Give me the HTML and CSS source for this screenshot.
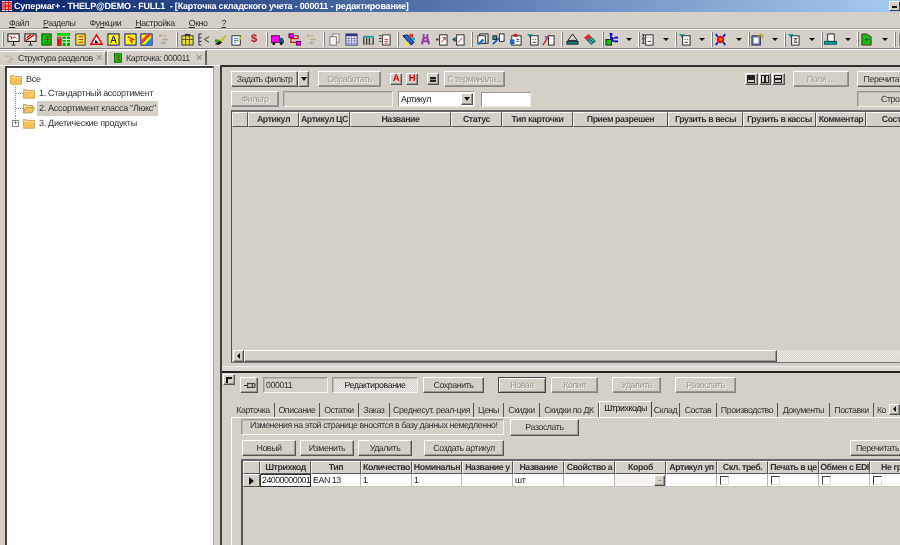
FILE: index.html
```html
<!DOCTYPE html>
<html lang="ru">
<head>
    <meta charset="UTF-8">
    <title>Супермаг+</title>
    <link rel="stylesheet" href="styles.css">
</head>
<body>

<!-- Icon set -->
<svg class="icon-defs" width="0" height="0">
    <symbol id="i-board" viewBox="0 0 14 14"><rect x="1" y="1" width="12" height="8" fill="#fff" stroke="#000"/><path d="M3 4h2v3M6 6l2-2 2 2" stroke="#d00" fill="none"/><path d="M7 9v3M5 13h4" stroke="#000"/></symbol>
    <symbol id="i-board2" viewBox="0 0 14 14"><rect x="1" y="1" width="12" height="8" fill="#e8e8e8" stroke="#000"/><path d="M2 8l9-6M3 5l4-3" stroke="#e00" stroke-width="1.4"/><path d="M7 9v3M5 13h4" stroke="#000"/></symbol>
    <symbol id="i-greendoc" viewBox="0 0 14 14"><rect x="2" y="1" width="10" height="12" fill="#0c0" stroke="#040"/><path d="M8 3v8M5 4h5M5 7h5M5 10h5" stroke="#b02020"/></symbol>
    <symbol id="i-greentable" viewBox="0 0 14 14"><rect width="14" height="3" fill="#0c0"/><rect y="4" width="5" height="10" fill="#d02020"/><rect x="1" y="5" width="3" height="1" fill="#6c6"/><rect x="6" y="4" width="8" height="10" fill="#0a0"/><path d="M6 7h8M6 10h8M10 4v10" stroke="#dfd"/></symbol>
    <symbol id="i-yellowdoc" viewBox="0 0 14 14"><rect x="2" y="1" width="10" height="12" fill="#f0e040" stroke="#333"/><path d="M5 4h5M5 7h5M5 10h5" stroke="#d02020"/></symbol>
    <symbol id="i-warn" viewBox="0 0 14 14"><path d="M7 2L13 12H1Z" fill="#fff" stroke="#e00" stroke-width="1.6"/><path d="M6 7l3 4H5Z" fill="#000"/></symbol>
    <symbol id="i-yellow-a" viewBox="0 0 14 14"><rect x="1" y="1" width="12" height="12" fill="#ff0" stroke="#008"/><path d="M4 11L7 3l3 8M5 8h4" stroke="#008" fill="none"/></symbol>
    <symbol id="i-yellow-r" viewBox="0 0 14 14"><rect x="1" y="1" width="12" height="12" fill="#ff0" stroke="#008"/><path d="M4 4l6 3-3 1 2 3" stroke="#e02020" stroke-width="1.5" fill="none"/></symbol>
    <symbol id="i-multi" viewBox="0 0 14 14"><rect x="1" y="1" width="12" height="12" fill="#ff0" stroke="#008"/><path d="M13 1L1 13V8l7-7Z" fill="#e04040"/><path d="M13 4v9H5Z" fill="#28c"/></symbol>
    <symbol id="i-faint" viewBox="0 0 14 14"><path d="M3 3h7M5 7h7M3 11h7" stroke="#b8b860"/><path d="M2 2h2v2H2ZM6 9h2v3H6Z" fill="#a0a0c8"/><rect x="8" y="6" width="3" height="2" fill="#c8a0a0"/></symbol>
    <symbol id="i-olive" viewBox="0 0 14 14"><rect x="1" y="3" width="12" height="10" fill="#e8e040" stroke="#333"/><path d="M1 7h12M5 3v10M9 3v10" stroke="#605010"/><rect x="4" y="1" width="6" height="2" fill="#333"/></symbol>
    <symbol id="i-bracket" viewBox="0 0 14 14"><path d="M5 1H2v12h3M2 5h3M2 9h3" stroke="#224" fill="none"/><path d="M13 4L8 7l5 3" stroke="#333" fill="none"/></symbol>
    <symbol id="i-pen" viewBox="0 0 14 14"><path d="M1 12l5-4 3 2-4 3Z" fill="#111"/><path d="M6 8l6-6 1 2-5 6Z" fill="#c8c020"/><rect x="1" y="7" width="4" height="3" fill="#20a020"/></symbol>
    <symbol id="i-docpen" viewBox="0 0 14 14"><rect x="1" y="3" width="9" height="10" fill="#fff" stroke="#224"/><path d="M3 6h5M3 8h5M3 10h3" stroke="#28c"/><path d="M7 9l5-7 1 1-5 7Z" fill="#e8d020"/></symbol>
    <symbol id="i-truck" viewBox="0 0 14 14"><rect x="0" y="3" width="9" height="7" fill="#f0f" stroke="#404"/><path d="M9 5h3l2 3v3H9Z" fill="#086070"/><circle cx="3" cy="11.5" r="1.5" fill="#111"/><circle cx="11" cy="11.5" r="1.5" fill="#111"/></symbol>
    <symbol id="i-route" viewBox="0 0 14 14"><rect x="1" y="1" width="5" height="4" fill="#f0f" stroke="#404"/><rect x="9" y="9" width="5" height="4" fill="#f0f" stroke="#404"/><path d="M6 3h5v3H3v4h6" stroke="#c02020" fill="none" stroke-width="1.3"/></symbol>
    <symbol id="i-copies" viewBox="0 0 14 14"><rect x="5" y="1" width="7" height="9" fill="#eee" stroke="#888"/><rect x="2" y="4" width="7" height="9" fill="#f4f4f4" stroke="#777"/></symbol>
    <symbol id="i-bluegrid" viewBox="0 0 14 14"><rect x="1" y="1" width="12" height="12" fill="#fff" stroke="#33337a"/><rect x="1" y="1" width="12" height="2.5" fill="#33337a"/><path d="M1 6h12M1 8.5h12M1 11h12M4 3v10M7 3v10M10 3v10" stroke="#8080c0"/></symbol>
    <symbol id="i-cols" viewBox="0 0 14 14"><rect x="1" y="3" width="12" height="2" fill="#20a0a0"/><path d="M2 5v7M5 5v7M8 5v7M12 5v7" stroke="#333" stroke-width="1.4"/><path d="M1 12h12" stroke="#777"/></symbol>
    <symbol id="i-listdoc" viewBox="0 0 14 14"><rect x="5" y="2" width="8" height="11" fill="#fff" stroke="#333"/><path d="M7 7h4M7 9h4M7 11h4" stroke="#e04040"/><path d="M1 3h3M1 6h3" stroke="#222"/><path d="M1 9h3" stroke="#080"/></symbol>
    <symbol id="i-tool" viewBox="0 0 14 14"><path d="M1 3l5-1 7 8-3 3Z" fill="#2060d0" stroke="#113"/><rect x="8" y="1" width="4" height="4" fill="#e03030"/><rect x="4" y="10" width="3" height="3" fill="#f0e020"/><rect x="11" y="5" width="3" height="3" fill="#10b0b0"/></symbol>
    <symbol id="i-figure" viewBox="0 0 14 14"><path d="M4 1h2v3h2V1h2v4l2 6-2 2-1-3H5l-1 3-2-2 2-6Z" fill="#9040a0"/><rect x="6" y="6" width="2" height="2" fill="#e0c0f0"/></symbol>
    <symbol id="i-docr" viewBox="0 0 14 14"><rect x="5" y="2" width="8" height="11" fill="#fff" stroke="#222"/><path d="M7 10l4-5M8 5h3v3" stroke="#d02020" fill="none"/><path d="M1 7h3" stroke="#444" stroke-width="2"/></symbol>
    <symbol id="i-docl" viewBox="0 0 14 14"><rect x="5" y="2" width="8" height="11" fill="#fff" stroke="#222"/><path d="M7 10l4-5" stroke="#d02020"/><path d="M0 7l4-3v6Z" fill="#106060"/></symbol>
    <symbol id="i-stack" viewBox="0 0 14 14"><rect x="4" y="1" width="9" height="10" fill="#ddd" stroke="#222"/><rect x="2" y="3" width="8" height="8" fill="#fff" stroke="#222"/><path d="M1 12l6-6 2 2-5 5Z" fill="#2878c0"/></symbol>
    <symbol id="i-link" viewBox="0 0 14 14"><rect x="8" y="1" width="5" height="8" fill="#fff" stroke="#222"/><path d="M1 12l7-7" stroke="#2060c0" stroke-width="2"/><rect x="1" y="3" width="4" height="4" fill="#20a0a0" stroke="#222"/></symbol>
    <symbol id="i-docpin" viewBox="0 0 14 14"><rect x="3" y="3" width="10" height="10" fill="#fff" stroke="#222"/><path d="M5 1h4v3H5Z" fill="#c02020"/><rect x="1" y="7" width="5" height="5" fill="#2868c0"/><path d="M8 7h3M8 9h3" stroke="#444"/></symbol>
    <symbol id="i-doctri" viewBox="0 0 14 14"><path d="M1 1h6L4 5Z" fill="#10a0a0"/><rect x="5" y="3" width="8" height="10" fill="#fff" stroke="#222"/><path d="M7 7h1M10 7h1M7 10h4" stroke="#333"/></symbol>
    <symbol id="i-arrowdoc" viewBox="0 0 14 14"><rect x="7" y="3" width="6" height="10" fill="#fff" stroke="#222"/><path d="M1 13L8 2" stroke="#c02020" stroke-width="1.4"/><path d="M3 3l3 3M6 3L3 6" stroke="#2060c0"/></symbol>
    <symbol id="i-scale" viewBox="0 0 14 14"><path d="M7 1L2 8h10Z" fill="none" stroke="#222"/><rect x="1" y="9" width="12" height="3" fill="#108080" stroke="#222"/></symbol>
    <symbol id="i-teal" viewBox="0 0 14 14"><path d="M1 5l5-4 3 3-5 4Z" fill="#d03030"/><path d="M4 8l5-4 5 5-5 4Z" fill="#107070"/><path d="M6 8l4 3M8 6l4 3" stroke="#9cc"/></symbol>
    <symbol id="i-greentree" viewBox="0 0 14 14"><rect x="1" y="7" width="6" height="6" fill="#10c010" stroke="#222"/><rect x="5" y="0" width="3" height="3" fill="#00d"/><rect x="10" y="4" width="4" height="2" fill="#00d"/><rect x="10" y="8" width="4" height="2" fill="#00d"/><path d="M6 3v3h4M8 6v3h2" stroke="#00d"/></symbol>
    <symbol id="i-listdoc2" viewBox="0 0 14 14"><rect x="5" y="2" width="8" height="11" fill="#fff" stroke="#222"/><path d="M7 5h1M10 5h1M7 9h4" stroke="#333"/><path d="M1 2h3M2.5 2v9M1 11h3" stroke="#222"/><rect x="1" y="5" width="3" height="2" fill="#555"/></symbol>
    <symbol id="i-burst" viewBox="0 0 14 14"><circle cx="7" cy="7" r="4" fill="#f01010"/><path d="M2 1l2 3M12 1l-2 3M2 13l2-3M12 13l-2-3" stroke="#0020d0" stroke-width="2"/><circle cx="7" cy="7" r="1.5" fill="#f0a000"/></symbol>
    <symbol id="i-purpledoc" viewBox="0 0 14 14"><rect x="1" y="3" width="9" height="10" fill="#8080e0" stroke="#224"/><rect x="3" y="5" width="5" height="6" fill="#fff"/><path d="M8 4a2.5 2.5 0 1 1 4 2" fill="none" stroke="#c0a020" stroke-width="1.4"/></symbol>
    <symbol id="i-docs" viewBox="0 0 14 14"><path d="M1 1h6L4 5Z" fill="#10a0a0"/><rect x="5" y="3" width="8" height="10" fill="#fff" stroke="#222"/><path d="M7 6h4l-3 2 3 2H7" stroke="#444" fill="none"/></symbol>
    <symbol id="i-printer" viewBox="0 0 14 14"><rect x="4" y="1" width="7" height="8" fill="#fff" stroke="#222"/><rect x="0" y="9" width="14" height="3" fill="#10a0a0" stroke="#044"/></symbol>
    <symbol id="i-greenfolder" viewBox="0 0 14 14"><path d="M2 1h5l5 3v9H2Z" fill="#10c010" stroke="#622"/><path d="M5 7h5M7 5v4" stroke="#064"/></symbol>
    <symbol id="i-bars" viewBox="0 0 14 14"><rect x="1" y="1" width="8" height="12" fill="#e8e020" stroke="#444"/><rect x="2" y="3" width="6" height="3" fill="#e02020"/><rect x="2" y="8" width="6" height="3" fill="#10b010"/></symbol>
    <symbol id="i-folder" viewBox="0 0 14 12"><path d="M0.5 2.5V1.5h4l1 1h8v9h-13Z" fill="#f6c35a" stroke="#c8a050"/><rect x="1" y="3" width="12" height="1" fill="#fbe3a8"/></symbol>
    <symbol id="i-folder-open" viewBox="0 0 14 12"><path d="M0.5 11V1.5h4l1 1h6V5" fill="#f6d98c" stroke="#a89050"/><path d="M0.5 11l3-6h10l-3 6Z" fill="#f6c35a" stroke="#a89050"/></symbol>
    <symbol id="i-logo" viewBox="0 0 12 12"><rect width="12" height="12" fill="#fff"/><path d="M1 2h10v3H1ZM1 7h10v3H1Z" fill="none" stroke="#e01010" stroke-width="1.4"/><path d="M4 0v12M8 0v12" stroke="#e01010" stroke-width="1.4"/></symbol>
    <symbol id="i-pin" viewBox="0 0 14 12"><path d="M1 6h4" stroke="#222"/><path d="M5 3v6M5 4h8M5 8h8M13 4v4M10 4v4" stroke="#222" fill="none"/></symbol>
</svg>

<!-- Window title -->
<div class="titlebar">
    <svg class="title-logo"><use href="#i-logo"/></svg>
    <span class="title-text">Супермаг+ - THELP@DEMO - FULL1&nbsp; - [Карточка складского учета - 000011 - редактирование]</span>
    <span class="title-min"><i></i></span>
</div>

<!-- Main menu -->
<div class="menubar">
    <span class="menu-item"><u>Ф</u>айл</span>
    <span class="menu-item"><u>Р</u>азделы</span>
    <span class="menu-item">Фу<u>н</u>кции</span>
    <span class="menu-item"><u>Н</u>астройка</span>
    <span class="menu-item"><u>О</u>кно</span>
    <span class="menu-item"><u>?</u></span>
</div>

<!-- Toolbar -->
<div class="toolbar">
    <span class="grip"></span>
    <span class="tb"><svg><use href="#i-board"/></svg></span>
    <span class="tb"><svg><use href="#i-board2"/></svg></span>
    <span class="tb"><svg><use href="#i-greendoc"/></svg></span>
    <span class="tb"><svg><use href="#i-greentable"/></svg></span>
    <span class="tb"><svg><use href="#i-yellowdoc"/></svg></span>
    <span class="tb"><svg><use href="#i-warn"/></svg></span>
    <span class="tb"><svg><use href="#i-yellow-a"/></svg></span>
    <span class="tb"><svg><use href="#i-yellow-r"/></svg></span>
    <span class="tb"><svg><use href="#i-multi"/></svg></span>
    <span class="tb"><svg><use href="#i-faint"/></svg></span>
    <span class="grip"></span>
    <span class="tb"><svg><use href="#i-olive"/></svg></span>
    <span class="tb"><svg><use href="#i-bracket"/></svg></span>
    <span class="tb"><svg><use href="#i-pen"/></svg></span>
    <span class="tb"><svg><use href="#i-docpen"/></svg></span>
    <span class="tb tb-dollar">$</span>
    <span class="grip"></span>
    <span class="tb"><svg><use href="#i-truck"/></svg></span>
    <span class="tb"><svg><use href="#i-route"/></svg></span>
    <span class="tb"><svg><use href="#i-faint"/></svg></span>
    <span class="grip"></span>
    <span class="tb"><svg><use href="#i-copies"/></svg></span>
    <span class="tb"><svg><use href="#i-bluegrid"/></svg></span>
    <span class="tb"><svg><use href="#i-cols"/></svg></span>
    <span class="tb"><svg><use href="#i-listdoc"/></svg></span>
    <span class="grip"></span>
    <span class="tb"><svg><use href="#i-tool"/></svg></span>
    <span class="tb"><svg><use href="#i-figure"/></svg></span>
    <span class="tb"><svg><use href="#i-docr"/></svg></span>
    <span class="tb"><svg><use href="#i-docl"/></svg></span>
    <span class="grip"></span>
    <span class="tb"><svg><use href="#i-stack"/></svg></span>
    <span class="tb"><svg><use href="#i-link"/></svg></span>
    <span class="tb"><svg><use href="#i-docpin"/></svg></span>
    <span class="tb"><svg><use href="#i-doctri"/></svg></span>
    <span class="tb"><svg><use href="#i-arrowdoc"/></svg></span>
    <span class="grip"></span>
    <span class="tb"><svg><use href="#i-scale"/></svg></span>
    <span class="tb"><svg><use href="#i-teal"/></svg></span>
    <span class="grip"></span>
    <span class="tb-drop"><svg><use href="#i-greentree"/></svg><i class="drop-arrow"></i></span>
    <span class="grip"></span>
    <span class="tb-drop"><svg><use href="#i-listdoc2"/></svg><i class="drop-arrow"></i></span>
    <span class="grip"></span>
    <span class="tb-drop"><svg><use href="#i-doctri"/></svg><i class="drop-arrow"></i></span>
    <span class="grip"></span>
    <span class="tb-drop"><svg><use href="#i-burst"/></svg><i class="drop-arrow"></i></span>
    <span class="grip"></span>
    <span class="tb-drop"><svg><use href="#i-purpledoc"/></svg><i class="drop-arrow"></i></span>
    <span class="grip"></span>
    <span class="tb-drop"><svg><use href="#i-docs"/></svg><i class="drop-arrow"></i></span>
    <span class="grip"></span>
    <span class="tb-drop"><svg><use href="#i-printer"/></svg><i class="drop-arrow"></i></span>
    <span class="grip"></span>
    <span class="tb-drop"><svg><use href="#i-greenfolder"/></svg><i class="drop-arrow"></i></span>
    <span class="grip"></span>
    <span class="tb"><svg><use href="#i-bars"/></svg></span>
</div>

<!-- Document tabs -->
<div class="doc-tabs">
    <div class="doc-tab doc-tab-first">
        <svg class="doc-tab-icon"><use href="#i-faint"/></svg>
        <span>Структура разделов</span>
        <span class="doc-close">×</span>
    </div>
    <div class="doc-tab doc-tab-second">
        <svg class="doc-tab-icon"><use href="#i-greendoc"/></svg>
        <span>Карточка: 000011</span>
        <span class="doc-close">×</span>
    </div>
</div>

<div class="workspace">

    <!-- Section tree -->
    <div class="tree-panel">
        <div class="tree">
            <div class="tree-row">
                <svg class="folder"><use href="#i-folder"/></svg>
                <span class="tree-label">Все</span>
            </div>
            <div class="tree-row tree-child">
                <i class="tree-line"></i>
                <svg class="folder"><use href="#i-folder"/></svg>
                <span class="tree-label">1. Стандартный ассортимент</span>
            </div>
            <div class="tree-row tree-child">
                <i class="tree-line"></i>
                <svg class="folder"><use href="#i-folder-open"/></svg>
                <span class="tree-label tree-selected">2. Ассортимент класса "Люкс"</span>
            </div>
            <div class="tree-row tree-child">
                <i class="tree-plus">+</i>
                <svg class="folder"><use href="#i-folder"/></svg>
                <span class="tree-label">3. Диетические продукты</span>
            </div>
        </div>
    </div>

    <div class="main-panel">

        <!-- Item list -->
        <div class="list-section">
            <div class="filter-row">
                <span class="btn w-set-filter">Задать фильтр</span>
                <span class="btn w-filter-arrow"><i class="arrow-down"></i></span>
                <span class="btn disabled w-process">Обработать</span>
                <span class="btn w-letter letter">А</span>
                <span class="btn w-letter letter">Н</span>
                <span class="btn w-letter equals"><i></i></span>
                <span class="btn disabled w-terminal">С терминала...</span>
                <span class="view-btns">
                    <span class="btn view-btn"><i class="view-a"></i></span>
                    <span class="btn view-btn"><i class="view-b"></i></span>
                    <span class="btn view-btn"><i class="view-c"></i></span>
                </span>
                <span class="btn disabled w-fields">Поля ...</span>
                <span class="btn w-reread">Перечитать</span>
            </div>
            <div class="search-row">
                <span class="btn disabled w-filter">Фильтр</span>
                <span class="sunken w-filter-text"></span>
                <span class="combo"><span class="combo-text">Артикул</span><span class="btn combo-btn"><i class="arrow-down"></i></span></span>
                <span class="text-input"></span>
                <span class="sunken w-rows">Строк</span>
            </div>
            <div class="grid list-grid">
                <div class="grid-row list-cols">
                    <span class="cell-head"></span>
                    <span class="cell-head">Артикул</span>
                    <span class="cell-head">Артикул ЦС</span>
                    <span class="cell-head">Название</span>
                    <span class="cell-head">Статус</span>
                    <span class="cell-head">Тип карточки</span>
                    <span class="cell-head">Прием разрешен</span>
                    <span class="cell-head">Грузить в весы</span>
                    <span class="cell-head">Грузить в кассы</span>
                    <span class="cell-head">Комментар</span>
                    <span class="cell-head">Состав</span>
                </div>
                <div class="grid-body"></div>
                <div class="hscroll">
                    <span class="btn scroll-btn"><i class="arrow-left"></i></span>
                    <span class="btn scroll-thumb"></span>
                    <span class="scroll-track"></span>
                </div>
            </div>
        </div>

        <div class="splitter"></div>

        <!-- Item card -->
        <div class="card-section">
            <div class="card-top">
                <span class="btn corner-btn"><i class="corner-arrow"></i></span>
                <div class="action-row">
                    <span class="btn pin-btn"><svg><use href="#i-pin"/></svg></span>
                    <span class="sunken w-code">000011</span>
                    <span class="sunken mode-box">Редактирование</span>
                    <span class="btn w-save">Сохранить</span>
                    <span class="btn disabled default-btn w-new">Новая</span>
                    <span class="btn disabled w-copy">Копия</span>
                    <span class="btn disabled w-delete">Удалить</span>
                    <span class="btn disabled w-send">Разослать</span>
                </div>
            </div>

            <div class="page-tabs">
                <span class="page-tab">Карточка</span>
                <span class="page-tab">Описание</span>
                <span class="page-tab">Остатки</span>
                <span class="page-tab">Заказ</span>
                <span class="page-tab">Среднесут. реал-ция</span>
                <span class="page-tab">Цены</span>
                <span class="page-tab">Скидки</span>
                <span class="page-tab">Скидки по ДК</span>
                <span class="page-tab page-tab-active">Штрихкоды</span>
                <span class="page-tab">Склад</span>
                <span class="page-tab">Состав</span>
                <span class="page-tab">Производство</span>
                <span class="page-tab">Документы</span>
                <span class="page-tab">Поставки</span>
                <span class="page-tab page-tab-last">Ко</span>
                <span class="tab-scroll"><span class="btn tab-scroll-btn"><i class="arrow-left"></i></span></span>
            </div>

            <div class="tab-page">
                <div class="notice-row">
                    <span class="sunken notice">Изменения на этой странице вносятся в базу данных немедленно!</span>
                    <span class="btn w-send-now">Разослать</span>
                </div>
                <div class="barcode-actions">
                    <span class="btn w-bc">Новый</span>
                    <span class="btn w-bc">Изменить</span>
                    <span class="btn w-bc">Удалить</span>
                    <span class="btn w-create">Создать артикул</span>
                    <span class="btn w-reread2">Перечитать</span>
                </div>
                <div class="grid barcode-grid">
                    <div class="grid-row barcode-cols">
                        <span class="cell-head"></span>
                        <span class="cell-head">Штрихкод</span>
                        <span class="cell-head">Тип</span>
                        <span class="cell-head">Количество</span>
                        <span class="cell-head">Номинальн</span>
                        <span class="cell-head">Название у</span>
                        <span class="cell-head">Название</span>
                        <span class="cell-head">Свойство а</span>
                        <span class="cell-head">Короб</span>
                        <span class="cell-head">Артикул уп</span>
                        <span class="cell-head">Скл. треб.</span>
                        <span class="cell-head">Печать в це</span>
                        <span class="cell-head">Обмен с EDI</span>
                        <span class="cell-head">Не груз</span>
                    </div>
                    <div class="grid-row barcode-cols">
                        <span class="cell-head row-mark"><i class="arrow-right"></i></span>
                        <span class="cell cell-focus">24000000001</span>
                        <span class="cell">EAN 13</span>
                        <span class="cell">1</span>
                        <span class="cell">1</span>
                        <span class="cell"></span>
                        <span class="cell">шт</span>
                        <span class="cell"></span>
                        <span class="cell cell-lookup"><span class="btn lookup-btn">...</span></span>
                        <span class="cell"></span>
                        <span class="cell"><i class="check"></i></span>
                        <span class="cell"><i class="check"></i></span>
                        <span class="cell"><i class="check"></i></span>
                        <span class="cell"><i class="check"></i></span>
                    </div>
                </div>
            </div>
        </div>
    </div>
</div>

</body>
</html>
```

FILE: styles.css
```css
* {
    box-sizing: border-box;
}

body {
    margin: 0;
    width: 900px;
    height: 545px;
    overflow: hidden;
    display: flex;
    flex-direction: column;
    background: #d4d0c8;
    color: #222;
    font-family: "Liberation Sans", Arial, sans-serif;
    font-size: 8.8px;
    letter-spacing: -0.42px;
    line-height: 1;
    text-rendering: geometricPrecision;
    filter: blur(0.3px); /* the screenshot is a scaled-down capture */
}

.icon-defs {
    display: block;
    height: 0;
}

i {
    display: block;
    font-style: normal;
}

/* Title bar */
.titlebar {
    height: 12px;
    display: flex;
    align-items: center;
    flex: none;
    padding-left: 2px;
    background: linear-gradient(to right, #0a246a, #a6caf0);
    color: white;
    font-weight: bold;
    font-size: 9px;
    letter-spacing: -0.2px;
}

.title-logo {
    width: 10px;
    height: 10px;
    margin-right: 2px;
}

.title-text {
    white-space: pre;
    flex: 1;
}

.title-min {
    width: 11px;
    height: 10px;
    display: flex;
    align-items: flex-end;
    padding: 0 0 2px 2px;
    background: #d4d0c8;
    border: 1px solid;
    border-color: #fff #444 #444 #fff;
}

.title-min i {
    width: 5px;
    height: 2px;
    background: #111;
}

/* Menu */
.menubar {
    height: 17px;
    flex: none;
    display: flex;
    align-items: center;
    padding: 5px 0 0 9px;
    gap: 14px;
    color: #333;
}

/* Toolbar */
.toolbar {
    height: 20px;
    flex: none;
    display: flex;
    align-items: center;
    border-top: 1px solid #fff;
    border-bottom: 1px solid #808080;
    box-shadow: 0 1px 0 #fff, 0 -1px 0 #a8a49c;
    padding-left: 1px;
    overflow: hidden;
}

.grip {
    width: 2px;
    height: 15px;
    margin: 0 1px 0 4px;
    flex: none;
    border-left: 1px solid #fff;
    border-right: 1px solid #808080;
}

.grip:first-child {
    margin-left: 1px;
}

.tb {
    width: 16.7px;
    height: 13px;
    flex: none;
    display: flex;
    justify-content: center;
}

.tb svg,
.tb-drop svg {
    width: 13px;
    height: 13px;
}

.tb-dollar {
    color: #b01818;
    font-size: 11px;
    font-weight: bold;
    line-height: 13px;
}

.tb-drop {
    width: 29.5px;
    height: 13px;
    flex: none;
    display: flex;
    align-items: center;
    justify-content: space-between;
    padding-right: 2px;
}

.drop-arrow {
    border: 3px solid transparent;
    border-top: 3px solid #111;
    border-bottom: 0;
}

/* Document tabs */
.doc-tabs {
    height: 16px;
    flex: none;
    display: flex;
    align-items: flex-end;
    padding-top: 1px;
}

.doc-tab {
    height: 14px;
    display: flex;
    align-items: center;
    border-top: 1px solid #fff;
    border-right: 2px solid #808080;
    padding: 0 3px 0 5px;
    color: #333;
    gap: 3px;
    white-space: nowrap;
}

.doc-tab-first {
    width: 107px;
}

.doc-tab-second {
    width: 100px;
    height: 15px;
    border-left: 1px solid #fff;
    border-right: 2px solid #666;
}

.doc-tab-icon {
    width: 10px;
    height: 10px;
    flex: none;
}

.doc-close {
    color: #999;
    font-size: 11px;
    font-weight: bold;
    margin-left: auto;
}

/* Workspace */
.workspace {
    flex: 1;
    min-height: 0;
    display: flex;
}

.tree-panel {
    width: 220px;
    flex: none;
    padding: 0 6px 0 5px;
    border-top: 1px solid #fff;
}

.tree {
    height: 100%;
    background: #fff;
    border-top: 2px solid #404040;
    border-left: 2px solid #404040;
    border-right: 1px solid #a0a0a0;
    padding: 4px 0 0 3px;
    font-size: 9px;
    letter-spacing: -0.3px;
}

.tree-row {
    height: 14.6px;
    display: flex;
    align-items: center;
    color: #333;
}

.tree-child {
    padding-left: 13px;
    background: repeating-linear-gradient(#999 0 1px, transparent 1px 2px) 5px 0 / 1px 100% no-repeat;
}

.tree-child:last-child {
    background-size: 1px 50%;
}

.tree-line {
    width: 7px;
    margin-left: -7px;
    margin-right: 0;
    border-top: 1px dotted #999;
}

.tree-plus {
    width: 7px;
    height: 7px;
    margin-left: -11px;
    margin-right: 4px;
    border: 1px solid #888;
    background: #fff;
    font-size: 7px;
    line-height: 5px;
    text-align: center;
}

.folder {
    width: 12px;
    height: 11px;
    flex: none;
}

.tree-label {
    margin-left: 3px;
    padding: 2px 1px;
}

.tree-selected {
    background: #d4d0c8;
    margin-left: 2px;
    padding: 3px 2px;
}

.main-panel {
    flex: 1;
    min-width: 0;
    display: flex;
    flex-direction: column;
    border-left: 2px solid #404040;
    border-top: 2px solid #303030;
    overflow: hidden;
}

/* Buttons */
.btn {
    display: flex;
    align-items: center;
    justify-content: center;
    flex: none;
    height: 16px;
    background: #d4d0c8;
    border: 1px solid;
    border-color: #fff #555 #555 #fff;
    box-shadow: inset -1px -1px 0 #9c9890;
    color: #333;
    white-space: nowrap;
}

.disabled {
    color: #a09c94;
    text-shadow: 1px 1px 0 #f4f2ee;
    border-color: #fff #888 #888 #fff;
}

.default-btn {
    border-color: #444;
    box-shadow: inset 1px 1px 0 #fff, inset -1px -1px 0 #9c9890;
}

.sunken {
    display: flex;
    align-items: center;
    flex: none;
    height: 16px;
    border: 1px solid;
    border-color: #9c9890 #f4f2ee #f4f2ee #9c9890;
    box-shadow: inset 1px 1px 0 #bdb9b0;
    color: #333;
    white-space: nowrap;
}

/* Filter rows */
.list-section {
    height: 299px;
    flex: none;
    padding-left: 9px;
    display: flex;
    flex-direction: column;
}

.filter-row {
    display: flex;
    align-items: center;
    height: 16px;
    margin-top: 4px;
}

.w-set-filter { width: 67px; }
.w-filter-arrow { width: 11px; }
.w-process { width: 63px; margin-left: 9px; }
.w-letter { width: 12px; height: 12px; margin-left: 9px; }
.letter { color: #e00000; font-size: 9.5px; font-weight: bold; margin-left: 4px; }
.w-process + .letter { margin-left: 9px; }
.w-terminal { width: 61px; margin-left: 5px; }
.w-fields { width: 56px; margin-left: 8px; }
.w-reread { width: 70px; margin-left: 8px; justify-content: flex-start; padding-left: 6px; }

.equals i {
    width: 6px;
    height: 5px;
    border-top: 2px solid #222;
    border-bottom: 2px solid #222;
    background: #888;
}

.view-btns {
    margin-left: 240px;
    display: flex;
    gap: 1px;
}

.view-btn {
    width: 12.5px;
    height: 12px;
}

.view-btn i {
    width: 8px;
    height: 8px;
    border: 1px solid #222;
}

.view-a { background: linear-gradient(#222 60%, #d4d0c8 60%); }
.view-b { background: linear-gradient(to right, transparent 40%, #222 40%, #222 60%, transparent 60%); }
.view-c { background: linear-gradient(transparent 40%, #222 40%, #222 60%, transparent 60%); }

.arrow-down {
    border: 3px solid transparent;
    border-top: 4px solid #111;
    border-bottom: 0;
}

.arrow-left {
    border: 3px solid transparent;
    border-right: 3px solid #111;
    border-left: 0;
}

.arrow-right {
    border: 4px solid transparent;
    border-left: 5px solid #111;
    border-right: 0;
}

.search-row {
    display: flex;
    align-items: center;
    height: 16px;
    margin-top: 4px;
}

.w-filter { width: 48px; }
.w-filter-text { width: 110px; margin-left: 4px; }

.combo {
    width: 77px;
    height: 16px;
    margin-left: 5px;
    flex: none;
    display: flex;
    align-items: center;
    justify-content: space-between;
    background: #fff;
    border: 1px solid #eeece8;
    border-color: #9c9890 #eeece8 #eeece8 #9c9890;
    padding: 1px 1px 1px 2px;
}

.combo-btn {
    width: 12px;
    height: 12px;
}

.text-input {
    width: 50px;
    height: 15px;
    margin-left: 6px;
    flex: none;
    background: #fff;
    border: 1px solid;
    border-color: #9c9890 #eeece8 #eeece8 #9c9890;
}

.w-rows {
    width: 70px;
    margin-left: 326px;
    padding-left: 23px;
}

/* Grids */
.grid {
    display: flex;
    flex-direction: column;
    border-left: 1px solid #555;
    border-top: 2px solid #666;
}

.list-grid {
    margin-top: 3px;
    height: 253px;
    width: 800px;
    border-bottom: 1px solid #777;
}

.grid-row {
    display: grid;
    flex: none;
}

.list-cols {
    height: 15px;
    grid-template-columns: 16px 51px 51px 101px 51px 71px 95px 75px 73px 50px 60px;
}

.barcode-cols {
    height: 13px;
    grid-template-columns: 17px 51px 50px 51px 50px 51px 51px 51px 51px 51px 51px 51px 51px 51px;
}

.cell-head {
    display: flex;
    align-items: center;
    justify-content: center;
    overflow: hidden;
    white-space: nowrap;
    border: 1px solid;
    border-color: #fff #555 #555 #f4f2ee;
    font-weight: bold;
    color: #333;
}

.grid-body {
    flex: 1;
}

.hscroll {
    height: 12px;
    display: flex;
    flex: none;
}

.scroll-btn {
    width: 11px;
    height: 12px;
    margin-left: 1px;
}

.scroll-thumb {
    width: 533px;
    height: 12px;
}

.scroll-track {
    flex: 1;
    background: repeating-conic-gradient(#e8e6e0 0 25%, #d8d5ce 0 50%) 0 0 / 2px 2px;
}

/* Splitter */
.splitter {
    height: 7px;
    flex: none;
    background: #dcd9d3;
    border-bottom: 2px solid #222;
    border-top: 1px solid #f0eeea;
}

/* Card */
.card-section {
    flex: 1;
    min-height: 0;
    display: flex;
    flex-direction: column;
}

.card-top {
    display: flex;
    align-items: flex-start;
    padding: 1px 0 0 1px;
}

.corner-btn {
    width: 12px;
    height: 11px;
}

.corner-arrow {
    width: 6px;
    height: 6px;
    border-top: 2px solid #111;
    border-left: 2px solid #111;
}

.action-row {
    display: flex;
    margin: 3px 0 0 5px;
}

.pin-btn {
    width: 18px;
}

.pin-btn svg {
    width: 13px;
    height: 11px;
}

.w-code { width: 65px; margin-left: 5px; padding-left: 2px; }

.mode-box {
    width: 86px;
    margin-left: 4px;
    justify-content: center;
    background: repeating-conic-gradient(#e8e6e0 0 25%, #d8d5ce 0 50%) 0 0 / 2px 2px;
    color: #222;
}

.w-save { width: 61px; margin-left: 5px; }
.w-new { width: 48px; margin-left: 14px; }
.w-copy { width: 47px; margin-left: 5px; }
.w-delete { width: 49px; margin-left: 14px; }
.w-send { width: 61px; margin-left: 14px; }

/* Page tabs */
.page-tabs {
    display: grid;
    grid-template-columns: 43px 45px 39px 31px 84px 30px 36px 59px 53px 28px 37px 61px 52px 44px 15px 11px;
    align-items: end;
    height: 16px;
    margin-top: 8px;
    padding-left: 10px;
    flex: none;
    overflow: hidden;
}

.page-tab {
    height: 14px;
    display: flex;
    align-items: center;
    justify-content: center;
    border-right: 1px solid #555;
    white-space: nowrap;
    overflow: hidden;
    color: #333;
}

.page-tab-active {
    height: 16px;
    padding-bottom: 2px;
    border-top: 1px solid #fff;
    border-left: 1px solid #fff;
    border-right: 1px solid #444;
    color: #111;
}

.page-tab-last {
    border-right: 0;
}

.tab-scroll {
    display: flex;
    align-self: center;
}

.tab-scroll-btn {
    width: 11px;
    height: 11px;
}

.tab-page {
    flex: 1;
    min-height: 0;
    margin-left: 9px;
    padding-left: 10px;
    border-top: 1px solid #fff;
    border-left: 1px solid #fff;
    display: flex;
    flex-direction: column;
}

.notice-row {
    display: flex;
    margin: 1px 0 0 -1px;
}

.notice {
    width: 263px;
    padding: 0 0 3px 8px;
}

.w-send-now {
    width: 69px;
    height: 17px;
    margin-left: 6px;
}

.barcode-actions {
    display: flex;
    margin-top: 4px;
}

.w-bc { width: 54px; margin-right: 4px; }
.w-create { width: 80px; margin-left: 8px; }
.w-reread2 { width: 55px; margin-left: 346px; }

.barcode-grid {
    margin: 3px 0 0 -1px;
    flex: 1;
    width: 700px;
    border-left: 2px solid #555;
    overflow: hidden;
}

.cell {
    display: flex;
    align-items: center;
    padding-left: 2px;
    background: #fff;
    border-right: 1px solid #bdb9b0;
    border-bottom: 1px solid #c8c4bc;
    overflow: hidden;
    white-space: nowrap;
    color: #222;
}

.cell-focus {
    border: 1px solid #333;
    padding-left: 1px;
    letter-spacing: -0.5px;
}

.cell-lookup {
    justify-content: flex-end;
    background: #f6f5f2;
    padding: 0;
}

.lookup-btn {
    width: 11px;
    height: 11px;
    font-size: 7px;
    align-items: flex-start;
}

.check {
    width: 9px;
    height: 9px;
    margin-left: 1px;
    background: #fff;
    border: 1px solid;
    border-color: #444 #ddd #ddd #444;
}
```
